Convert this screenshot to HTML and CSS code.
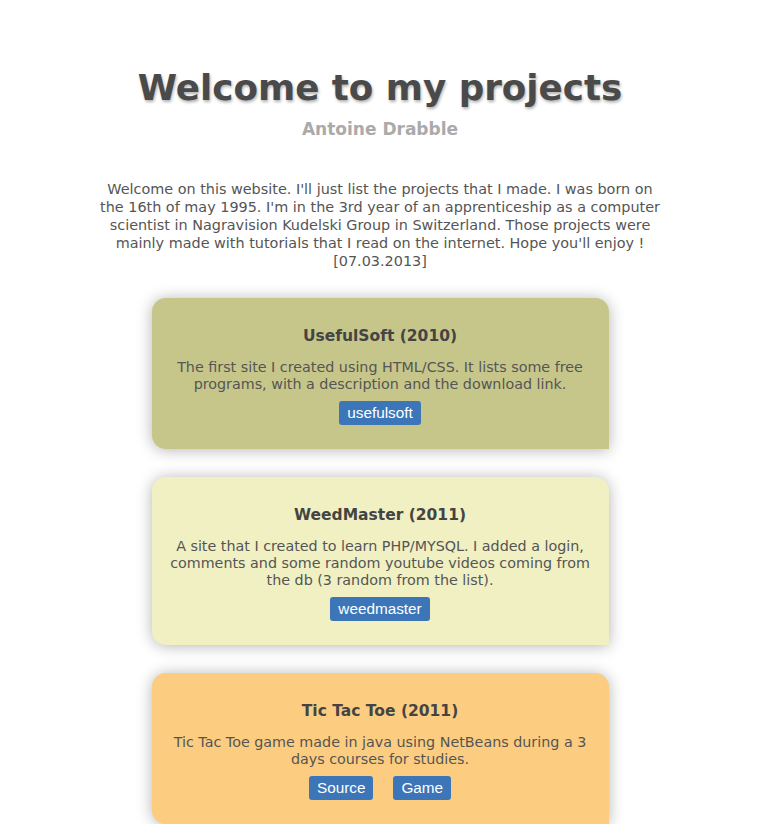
FILE: index.html
```html
<!DOCTYPE html>
<html>
<head>
<meta charset="utf-8">
<title>Welcome to my projects</title>
<link rel="stylesheet" href="styles.css">
</head>
<body>
<main class="page">
  <header class="header">
    <h1 class="title">Welcome to my projects</h1>
    <p class="author">Antoine Drabble</p>
  </header>
  <p class="intro">Welcome on this website. I'll just list the projects that I made. I was born on the 16th of may 1995. I'm in the 3rd year of an apprenticeship as a computer scientist in Nagravision Kudelski Group in Switzerland. Those projects were mainly made with tutorials that I read on the internet. Hope you'll enjoy ! [07.03.2013]</p>
  <section class="projects">
    <article class="card card-olive">
      <h2 class="card-title">UsefulSoft (2010)</h2>
      <p class="card-text">The first site I created using HTML/CSS. It lists some free programs, with a description and the download link.</p>
      <div class="card-links"><a class="btn" href="#">usefulsoft</a></div>
    </article>
    <article class="card card-pale">
      <h2 class="card-title">WeedMaster (2011)</h2>
      <p class="card-text">A site that I created to learn PHP/MYSQL. I added a login, comments and some random youtube videos coming from the db (3 random from the list).</p>
      <div class="card-links"><a class="btn" href="#">weedmaster</a></div>
    </article>
    <article class="card card-orange">
      <h2 class="card-title">Tic Tac Toe (2011)</h2>
      <p class="card-text">Tic Tac Toe game made in java using NetBeans during a 3 days courses for studies.</p>
      <div class="card-links"><a class="btn" href="#">Source</a><a class="btn" href="#">Game</a></div>
    </article>
  </section>
</main>
</body>
</html>
```

FILE: styles.css
```css
html, body {
  margin: 0;
  padding: 0;
  background: #ffffff;
}
body {
  font-family: "DejaVu Sans", Verdana, sans-serif;
  color: #555555;
  overflow: hidden;
}
.page {
  width: 760px;
  padding-top: 65px;
  display: flex;
  flex-direction: column;
  align-items: center;
  text-align: center;
}
.header {
  display: flex;
  flex-direction: column;
  align-items: center;
}
.title {
  margin: 0;
  font-size: 35.7px;
  line-height: 46px;
  font-weight: bold;
  color: #4a4a4a;
  text-shadow: 1px 2px 3px rgba(0, 0, 0, 0.3);
}
.author {
  margin: 8px 0 0;
  font-size: 17px;
  line-height: 20px;
  font-weight: bold;
  color: #aaaaaa;
}
.intro {
  width: 568px;
  margin: 41px 0 0;
  font-size: 14.4px;
  line-height: 18px;
  color: #555555;
}
.projects {
  margin-top: 28px;
  display: flex;
  flex-direction: column;
  align-items: center;
  gap: 28px;
}
.card {
  width: 457px;
  box-sizing: border-box;
  padding: 28px 14px 24px;
  border-radius: 14px 14px 0 14px;
  box-shadow: 0 1px 15px rgba(0, 0, 0, 0.3);
  color: #555555;
}
.card-olive { background: #c6c68a; }
.card-pale { background: #f0f0c2; }
.card-orange { background: #fccd80; }
.card-title {
  margin: 0;
  font-size: 15.5px;
  line-height: 20px;
  font-weight: bold;
  color: #444444;
}
.card-text {
  margin: 13px 0 0;
  font-size: 14.3px;
  line-height: 17px;
}
.card-links {
  margin-top: 8px;
  display: flex;
  justify-content: center;
  gap: 20px;
}
.btn {
  display: inline-block;
  padding: 0 8px;
  height: 24px;
  line-height: 24px;
  font-family: "Liberation Sans", Arial, sans-serif;
  font-size: 15.3px;
  color: #ffffff;
  text-decoration: none;
  background: #3c76b8;
  border-radius: 3px;
}
```
